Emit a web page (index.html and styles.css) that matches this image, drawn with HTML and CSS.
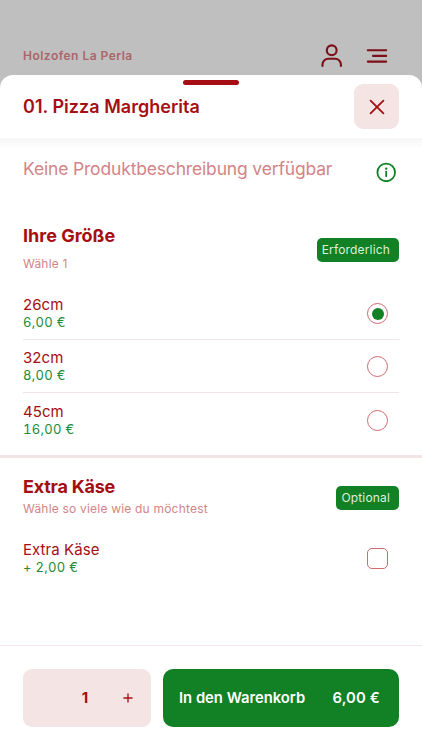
FILE: index.html
```html
<!DOCTYPE html>
<html lang="de">
<head>
<meta charset="utf-8">
<title>Holzofen La Perla</title>
<link rel="stylesheet" href="styles.css">
</head>
<body>
<header class="topbar">
  <span class="brand">Holzofen La Perla</span>
  <svg class="user" width="22" height="24" viewBox="0 0 22 24"><circle cx="10.7" cy="6.3" r="4.9"/><path d="M1.5 22v-1.5a5.8 5.8 0 0 1 5.8-5.8h6.8a5.8 5.8 0 0 1 5.8 5.8V22"/></svg>
  <svg class="menu" width="22" height="16" viewBox="0 0 22 16"><path d="M1.8 2.2h18.4M7 7.9h13.2M1.8 13.6h18.4"/></svg>
</header>
<main class="sheet">
  <div class="handle"></div>
  <div class="titlebar">
    <h1>01. Pizza Margherita</h1>
    <button class="close"><svg width="16" height="16" viewBox="0 0 16 16"><path d="M1.6 1.6l12.8 12.8M14.4 1.6L1.6 14.4"/></svg></button>
  </div>
  <div class="content">
    <div class="description">
      <p>Keine Produktbeschreibung verfügbar</p>
      <svg class="info" width="20" height="20" viewBox="0 0 20 20"><circle cx="10.2" cy="10.4" r="8.8"/><path d="M10.2 9.6v4.6"/><circle class="dot" cx="10.2" cy="6.6" r="1.2"/></svg>
    </div>
    <section class="group sizes">
      <div class="group-head">
        <div><h2>Ihre Größe</h2><p class="hint">Wähle 1</p></div>
        <span class="badge">Erforderlich</span>
      </div>
      <label class="option"><span><b class="name">26cm</b><i class="price">6,00 €</i></span><span class="radio checked"></span></label>
      <label class="option"><span><b class="name">32cm</b><i class="price">8,00 €</i></span><span class="radio"></span></label>
      <label class="option"><span><b class="name">45cm</b><i class="price">16,00 €</i></span><span class="radio"></span></label>
    </section>
    <section class="group extras">
      <div class="group-head">
        <div><h2>Extra Käse</h2><p class="hint">Wähle so viele wie du möchtest</p></div>
        <span class="badge">Optional</span>
      </div>
      <label class="option"><span><b class="name">Extra Käse</b><i class="price">+ 2,00 €</i></span><span class="checkbox"></span></label>
    </section>
  </div>
  <footer class="actions">
    <div class="quantity"><span></span><span class="count">1</span><svg width="10" height="10" viewBox="0 0 10 10"><path d="M5 .9v8.2M.9 5h8.2"/></svg></div>
    <button class="cart"><span class="cart-label">In den Warenkorb</span><span class="total">6,00 €</span></button>
  </footer>
</main>
</body>
</html>
```
FILE: styles.css
```css
* { box-sizing: border-box; }
body { margin: 0; width: 422px; height: 750px; overflow: hidden; background: #bfbfbf; font-family: Inter, "Liberation Sans", sans-serif; color: #a50e12; }
h1, h2, p { margin: 0; }
button { border: 0; padding: 0; font: inherit; }
svg { display: block; fill: none; stroke: #a50e12; stroke-width: 1.8; stroke-linecap: round; stroke-linejoin: round; flex: none; }
.topbar { height: 75px; display: flex; align-items: flex-end; padding: 0 34px 7px 23px; }
.brand { flex: 1; font-size: 12px; font-weight: 600; line-height: 16px; letter-spacing: .48px; color: #aa666b; margin-bottom: 4px; }
.topbar svg { stroke: #7b1017; stroke-width: 2.1; }
.user { margin-right: 23px; }
.topbar .menu { margin-bottom: 4px; }
.sheet { position: relative; height: 675px; background: #fff; border-radius: 13px 13px 0 0; display: flex; flex-direction: column; }
.handle { position: absolute; left: 183px; top: 5px; width: 56px; height: 5px; border-radius: 3px; background: #a50e12; }
.titlebar { height: 63px; flex: none; display: flex; justify-content: space-between; align-items: center; padding: 0 23px; }
h1 { font-size: 18px; font-weight: 600; line-height: 24px; letter-spacing: .02px; }
.close { width: 45px; height: 45px; border-radius: 9px; background: #f4e4e4; display: grid; place-items: center; }
.content { flex: 1; background: linear-gradient(#f6f6f6, #fff 11px); }
.description { height: 76px; padding: 19px 26px 0 23px; display: flex; justify-content: space-between; }
.description p { font-size: 17.5px; line-height: 24px; letter-spacing: -.165px; color: #d38487; white-space: nowrap; }
.info { margin-top: 5px; stroke: #128024; }
.info .dot { fill: #128024; stroke: none; }
.group { padding: 0 23px; }
.sizes { height: 244px; border-bottom: 3px solid #f5e4e6; }
.group-head { display: flex; justify-content: space-between; align-items: flex-start; height: 72px; padding-top: 10px; }
h2 { font-size: 18px; font-weight: 700; line-height: 24px; }
.hint { font-size: 12px; line-height: 16px; color: #d38487; letter-spacing: .2px; margin-top: 8px; }
.badge { height: 24px; margin-top: 14px; padding: 0 9px 0 5px; border-radius: 5px; background: #128024; color: #dcf0dc; font-size: 12px; line-height: 24px; letter-spacing: .16px; }
.option { height: 54px; display: flex; justify-content: space-between; align-items: flex-start; padding: 9px 11px 0 0; border-bottom: 1px solid #f5e4e6; }
.option:nth-child(3) { height: 53px; padding-top: 8px; }
.option:last-child { border: 0; }
.name, .price { display: block; font-style: normal; font-weight: 400; }
.name { font-size: 15px; line-height: 20px; letter-spacing: .06px; }
.price { font-size: 13px; line-height: 15px; color: #218b36; letter-spacing: .3px; font-variant-numeric: tabular-nums; }
.radio, .checkbox { width: 21px; height: 21px; border: 1px solid #cf6a70; display: grid; place-items: center; margin-top: 8px; }
.radio { border-radius: 50%; }
.checked::before { content: ""; width: 12px; height: 12px; border-radius: 50%; background: #128024; }
.checkbox { border-radius: 5px; }
.extras .group-head { height: 73px; padding-top: 17px; }
.extras h2 { letter-spacing: -.22px; }
.extras .hint { margin-top: 2px; }
.extras .badge { margin-top: 11px; }
.actions { height: 105px; border-top: 1px solid #f5e4e6; display: flex; gap: 12px; padding: 23px 23px 0; flex: none; }
.quantity { width: 128px; height: 58px; border-radius: 9px; background: #f4e4e4; display: grid; grid-template-columns: 41px 42px 44px; align-items: center; justify-items: center; }
.quantity svg { stroke-width: 1.3; }
.count { font-size: 15px; font-weight: 700; margin-top: -2px; }
.cart { flex: 1; height: 58px; border-radius: 10px; background: #128024; color: #fff; display: flex; justify-content: space-between; align-items: center; padding: 0 19px 0 16px; font-size: 14.8px; font-weight: 600; white-space: nowrap; }
.total { letter-spacing: .15px; }
```
